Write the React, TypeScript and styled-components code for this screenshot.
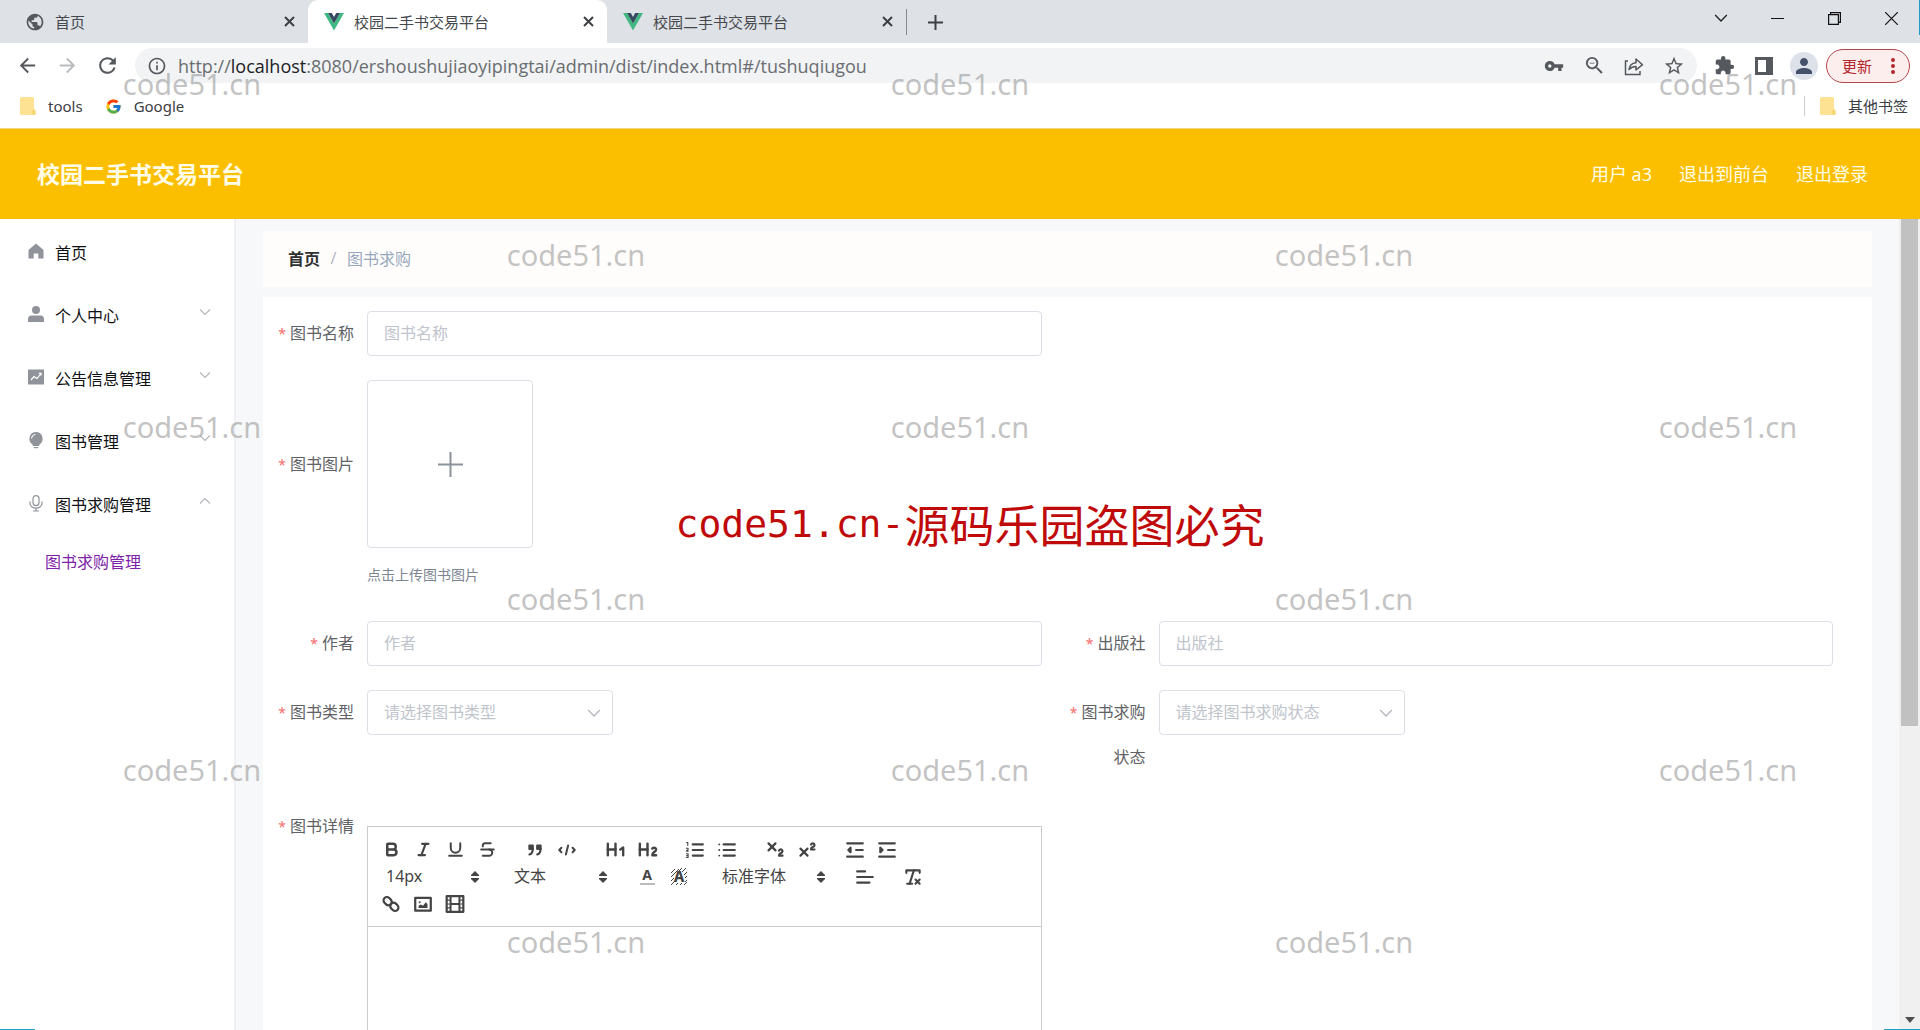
import React from "react";
import styled, { createGlobalStyle, css } from "styled-components";
import {
  MdArrowBack,
  MdArrowForward,
  MdRefresh,
  MdInfoOutline,
  MdVpnKey,
  MdZoomOut,
  MdStarBorder,
  MdExtension,
  MdPerson,
  MdPublic,
} from "react-icons/md";
import { FcGoogle } from "react-icons/fc";
import {
  Bold,
  Italic,
  Underline,
  Strikethrough,
  Heading1,
  Heading2,
  Subscript,
  Superscript,
  RemoveFormatting,
} from "lucide-react";

const sans = `"Noto Sans", "Noto Sans CJK SC", sans-serif`;

const GlobalStyle = createGlobalStyle`
  *, *::before, *::after { box-sizing: border-box; }
  body { margin: 0; font-family: ${sans}; font-size: 16px; color: #303133; overflow: hidden; }
  button, input, select, textarea { font: inherit; color: inherit; }
  button { background: none; border: 0; padding: 0; cursor: pointer; }
  a { color: inherit; text-decoration: none; }
  svg { display: block; flex: none; }
  ul, ol { list-style: none; margin: 0; padding: 0; }
`;

/* ---------- browser frame ---------- */

const Window = styled.div`
  position: relative;
  display: flex;
  flex-direction: column;
  height: 100vh;
  overflow: hidden;
  background: #fff;
`;

const TabStrip = styled.div`
  display: flex;
  flex: none;
  height: 43px;
  padding-left: 9px;
  background: #dee1e6;
`;

const Tab = styled.div<{ $active?: boolean }>`
  display: flex;
  align-items: center;
  gap: 10px;
  flex: 0 1 299px;
  padding: 0 10px 0 16px;
  border-radius: 10px 10px 0 0;
  background: ${(p) => (p.$active ? "#fff" : "transparent")};
  font-size: 15px;
  color: #45484c;
`;

const TabTitle = styled.span`
  flex: 1;
  overflow: hidden;
  white-space: nowrap;
`;

const TabClose = styled.button`
  display: grid;
  place-items: center;
  width: 18px;
  height: 18px;
`;

const NewTab = styled.button`
  display: grid;
  place-items: center;
  width: 58px;
  height: 26px;
  margin-top: 9px;
  border-left: 1px solid #85888d;
`;

const WindowControls = styled.div`
  display: flex;
  height: 36px;
  margin-left: auto;
`;

const WindowButton = styled.button`
  display: grid;
  place-items: center;
  width: 57px;
`;

const Toolbar = styled.div`
  display: flex;
  align-items: center;
  flex: none;
  height: 45px;
  padding: 0 10px 0 7px;
`;

const ToolButton = styled.button<{ $muted?: boolean }>`
  display: grid;
  place-items: center;
  flex: none;
  width: 40px;
  height: 34px;
  color: ${(p) => (p.$muted ? "#b9bbbe" : "#55585c")};
`;

const AddressBar = styled.div`
  display: flex;
  align-items: center;
  flex: 1;
  height: 35px;
  margin: 0 7px 0 8px;
  padding: 0 3px 0 12px;
  border-radius: 18px;
  background: #f1f3f4;
  color: #55585c;
`;

const Url = styled.span`
  flex: 1;
  margin-left: 11px;
  overflow: hidden;
  font-family: "Open Sans", sans-serif;
  font-size: 18px;
  line-height: 26px;
  white-space: nowrap;
  color: #6a6d71;

  b {
    font-weight: 400;
    color: #202124;
  }
`;

const Avatar = styled.span`
  display: grid;
  place-items: center;
  width: 28px;
  height: 28px;
  border-radius: 50%;
  background: #dde1ea;
  color: #45506b;
`;

const UpdateButton = styled.button`
  display: flex;
  align-items: center;
  justify-content: space-between;
  flex: none;
  width: 84px;
  height: 34px;
  margin-left: 2px;
  padding: 0 14px 0 15px;
  border: 1px solid #b4474c;
  border-radius: 17px;
  background: #fbeeed;
  font-size: 15px;
  color: #b3262b;
`;

const Bookmarks = styled.div`
  display: flex;
  align-items: center;
  flex: none;
  gap: 22px;
  height: 41px;
  padding: 0 12px 4px 20px;
  border-bottom: 1px solid #efd68a;
`;

const Bookmark = styled.a<{ $end?: boolean }>`
  display: flex;
  align-items: center;
  gap: 12px;
  font-size: 15px;
  line-height: 20px;
  color: #3c4043;
  ${(p) =>
    p.$end &&
    css`
      margin-left: auto;
      padding-left: 15px;
      border-left: 1px solid #c9ccd0;
    `}
`;

/* ---------- admin page ---------- */

const Header = styled.header`
  display: flex;
  align-items: center;
  justify-content: space-between;
  flex: none;
  height: 90px;
  padding: 0 52px 0 37px;
  background: #fcbf00;
  color: #fffde8;
`;

const Brand = styled.h1`
  margin: 0;
  font-size: 23px;
  line-height: 32px;
  font-weight: 700;
`;

const HeaderLinks = styled.div`
  display: flex;
  gap: 27px;
  font-size: 18px;
  line-height: 28px;
`;

const Body = styled.div`
  display: flex;
  flex: 1;
  min-height: 0;
`;

const Sidebar = styled.nav`
  flex: none;
  width: 236px;
  padding-top: 1px;
  border-right: 2px solid #eff0f3;
  background: #fff;
`;

const MenuButton = styled.button`
  display: flex;
  align-items: center;
  gap: 11px;
  width: 100%;
  height: 63px;
  padding: 0 23px 0 28px;
  text-align: left;
  color: #101113;
`;

const MenuText = styled.span`
  flex: 1;
`;

const MenuArrow = styled.span`
  margin-bottom: 6px;
`;

const SubMenuLink = styled.a`
  display: block;
  padding-left: 45px;
  line-height: 54px;
  color: #7d22a8;
`;

const Scroller = styled.main`
  flex: 1;
  min-width: 0;
  padding: 12px 27px 0;
  overflow: hidden;
  background: #f6f8fa;
`;

const Breadcrumb = styled.nav`
  display: flex;
  align-items: center;
  gap: 10px;
  height: 56px;
  margin-bottom: 10px;
  padding: 0 25px 2px;
  background: #fffdfb;
  color: #97a8be;
`;

const CrumbHome = styled.a`
  font-weight: 700;
  color: #303133;
`;

const CrumbSlash = styled.span`
  width: 7px;
  text-align: center;
  color: #b4b9c4;
`;

const FormCard = styled.form`
  display: grid;
  grid-template-columns: 1fr 1fr;
  row-gap: 24px;
  padding: 14px 13px;
  background: #fff;
`;

const Field = styled.div<{ $wide?: boolean }>`
  display: grid;
  grid-template-columns: 91px minmax(0, 1fr);
  padding-right: 26px;
  ${(p) =>
    p.$wide &&
    css`
      grid-column: 1 / -1;
      width: 50%;
    `}
`;

const Label = styled.label<{ $tall?: boolean }>`
  padding-right: 13px;
  text-align: right;
  line-height: ${(p) => (p.$tall ? 168 : 45)}px;
  color: #606266;

  &::before {
    content: "*";
    margin-right: 4px;
    font-size: 14px;
    color: #f56c6c;
  }
`;

const TextInput = styled.input`
  width: 100%;
  height: 45px;
  padding: 0 16px 2px;
  border: 1px solid #dcdfe6;
  border-radius: 4px;
  background: #fff;
  outline: 0;

  &::placeholder {
    color: #c0c4cc;
    opacity: 1;
  }
`;

const SelectBox = styled.div`
  display: grid;
  align-items: center;
  width: 246px;
  height: 45px;

  > * {
    grid-area: 1 / 1;
  }

  > svg {
    justify-self: end;
    margin-right: 12px;
    pointer-events: none;
  }
`;

const Select = styled.select`
  width: 100%;
  height: 45px;
  padding: 0 36px 2px 16px;
  appearance: none;
  border: 1px solid #dcdfe6;
  border-radius: 4px;
  background: #fff;
  color: #c0c4cc;
`;

const UploadButton = styled.button`
  display: grid;
  place-items: center;
  width: 166px;
  height: 168px;
  border: 1px solid #dcdfe6;
  border-radius: 4px;
`;

const UploadHint = styled.div`
  padding: 16px 0 11px;
  font-size: 14px;
  line-height: 22px;
  color: #7d8592;
`;

const Editor = styled.div`
  margin-top: 22px;
  border: 1px solid #ccc;
`;

const EditorToolbar = styled.div`
  padding: 9px 7px;
  border-bottom: 1px solid #ccc;
  color: #444;
`;

const EditorRow = styled.div`
  display: flex;
  gap: 16px;
  height: 27px;
`;

const EditorGroup = styled.span`
  display: flex;
`;

const EditorButton = styled.button`
  display: grid;
  place-items: center;
  width: 32px;
  height: 27px;
`;

const Picker = styled.span<{ $wide?: boolean }>`
  display: grid;
  align-items: center;
  width: ${(p) => (p.$wide ? 122 : 112)}px;

  > * {
    grid-area: 1 / 1;
  }

  > svg {
    justify-self: end;
    margin-right: 8px;
    pointer-events: none;
  }
`;

const PickerSelect = styled.select`
  width: 100%;
  height: 27px;
  padding: 0 11px 2px;
  appearance: none;
  border: 0;
  background: none;
  font-size: 16px;
`;

const EditorArea = styled.textarea`
  display: block;
  width: 100%;
  height: 240px;
  padding: 12px 16px;
  border: 0;
  outline: 0;
  resize: none;
  background: transparent;
`;

const ScrollTrack = styled.div`
  display: flex;
  flex-direction: column;
  justify-content: space-between;
  align-items: center;
  flex: none;
  width: 21px;
  padding-bottom: 7px;
  background: #f0f0f0;
`;

const ScrollThumb = styled.div`
  width: 17px;
  height: 63%;
  background: #c1c1c1;
`;

/* ---------- overlays ---------- */

const WatermarkLayer = styled.div`
  position: absolute;
  inset: -2px 0 2px;
  display: grid;
  grid-template-columns: repeat(5, 1fr);
  grid-template-rows: repeat(6, 1fr);
  place-items: center;
  pointer-events: none;
  font-size: 29px;
  line-height: 40px;
  color: rgba(150, 150, 150, 0.58);
`;

const Notice = styled.div`
  position: absolute;
  inset: 0;
  display: flex;
  align-items: center;
  justify-content: center;
  padding: 18px 0 0 20px;
  pointer-events: none;
  font-family: "Noto Sans CJK SC", sans-serif;
  font-size: 45px;
  line-height: 60px;
  white-space: nowrap;
  color: #c00a0a;
`;

const NoticeLatin = styled.span`
  font-family: "DejaVu Sans Mono", monospace;
  font-size: 38px;
`;

const Sliver = styled.i<{ $at: "topRight" | "bottomRight" | "bottomLeft" }>`
  position: absolute;
  background: #1f9fc4;
  ${(p) => p.$at === "topRight" && "top: 0; right: 0; width: 1px; height: 35px;"}
  ${(p) => p.$at === "bottomRight" && "bottom: 0; right: 0; width: 36px; height: 1px;"}
  ${(p) => p.$at === "bottomLeft" && "bottom: 0; left: 0; width: 35px; height: 1px;"}
`;

/* ---------- drawings ---------- */

const VueLogo = () => (
  <svg width="20" height="18" viewBox="0 0 20 18">
    <path d="M0 0h4l6 10.500L16 0h4L10 17.500z" fill="#41b883" />
    <path d="M4 0h3.800L10 4l2.200-4H16l-6 10.500z" fill="#35495e" />
  </svg>
);

const Cross = () => (
  <svg width="11" height="11" viewBox="0 0 11 11" stroke="#3c4043" strokeWidth="2">
    <path d="M1 1l9 9M10 1l-9 9" />
  </svg>
);

const Folder = () => (
  <svg width="16" height="18" viewBox="0 0 16 18">
    <path d="M1.500 0h11A1.500 1.500 0 0 1 14 1.500V12l1.500 2v2.500a1.500 1.500 0 0 1-1.500 1.500h-12.500A1.500 1.500 0 0 1 0 16.500v-15A1.500 1.500 0 0 1 1.500 0z" fill="#fde293" />
    <path d="M12.500 18v-4l1.500-2 1.500 2v2.500a1.500 1.500 0 0 1-1.500 1.500z" fill="#f3d36b" />
  </svg>
);

const ShareIcon = () => (
  <svg width="20" height="20" viewBox="0 0 20 20" fill="none" stroke="currentColor" strokeWidth="1.500">
    <path d="M4 5H1.500v13.500H16V15" />
    <path d="M5 13.500c.5-4.500 3-6.500 7-6.800V3l6.500 5.700L12 14v-3.500c-3 0-5 .8-7 3z" strokeLinejoin="round" />
  </svg>
);

const SidePanelIcon = () => (
  <svg width="18" height="18" viewBox="0 0 18 18">
    <path d="M0 0h18v18H0zM3 3v12h8V3z" fill="currentColor" fillRule="evenodd" />
  </svg>
);

const Dots = () => (
  <svg width="4" height="16" viewBox="0 0 4 16" fill="currentColor">
    <circle cx="2" cy="2" r="2" />
    <circle cx="2" cy="8" r="2" />
    <circle cx="2" cy="14" r="2" />
  </svg>
);

const Chevron = ({ up, size = 12, color = "#b4b7bd" }: { up?: boolean; size?: number; color?: string }) => (
  <svg width={size} height={size} viewBox="0 0 12 12" fill="none" stroke={color} strokeWidth="1.200">
    <path d={up ? "M1 8.500l5-5 5 5" : "M1 3.500l5 5 5-5"} />
  </svg>
);

const menuDrawings: Record<string, React.ReactNode> = {
  home: <path d="M8 .5L.5 7v8.500h5.200v-5h4.600v5h5.200V7z" fill="#909399" />,
  user: (
    <g fill="#909399">
      <circle cx="8" cy="4" r="4" />
      <path d="M0 16v-3a3.500 3.500 0 0 1 3.500-3.500h9A3.500 3.500 0 0 1 16 13v3z" />
    </g>
  ),
  chart: (
    <g>
      <path d="M0 .5h16v15H0z" fill="#909399" />
      <path d="M3 11l3-3.500 3 2 4-5M10.800 4.300H13v2.200" fill="none" stroke="#fff" strokeWidth="1.200" />
    </g>
  ),
  bulb: (
    <g>
      <path d="M8 0a6.800 6.800 0 0 1 3.500 12.500L11 14H5l-.5-1.500A6.800 6.800 0 0 1 8 0zM5.500 15h5l-1 1.300h-3z" fill="#909399" />
      <path d="M3.600 6.500A4.500 4.500 0 0 1 7.500 2.500" fill="none" stroke="#fff" strokeWidth="1.100" />
    </g>
  ),
  mic: (
    <g fill="none" stroke="#909399" strokeWidth="1.200">
      <rect x="5" y=".6" width="6" height="10" rx="3" />
      <path d="M2 6.500v1.700a6 5 0 0 0 12 0V6.500M8 13.200V16M5 16h6" />
    </g>
  ),
};

const PickerArrows = () => (
  <svg width="8" height="12" viewBox="0 0 8 12" fill="#444">
    <path d="M4 0l4 4v1H0V4zM4 12l4-4V7H0v1z" />
  </svg>
);

const Quill = ({ children }: { children: React.ReactNode }) => (
  <svg width="20" height="20" viewBox="0 0 18 18" fill="none" stroke="#444" strokeWidth="2" strokeLinecap="round" strokeLinejoin="round">
    {children}
  </svg>
);

const quote = (
  <Quill>
    <path d="M4 5h3v3H4zM11 5h3v3h-3z" fill="#444" />
    <path d="M7 8c0 4-3 5-3 5M14 8c0 4-3 5-3 5" />
  </Quill>
);
const code = (
  <Quill>
    <path d="M4 7L2 9l2 2M14 7l2 2-2 2M10 5L8 13" strokeWidth="1.800" />
  </Quill>
);
const orderedList = (
  <Quill>
    <path d="M7 4h9M7 9h9M7 14h9" />
    <path d="M1.500 2.200h1v2.600M1.200 7.400h1.600v1L1.200 10h1.800M1.200 12.400h1.600v3.200H1.200M1.500 14h1" strokeWidth="1" />
  </Quill>
);
const bulletList = (
  <Quill>
    <path d="M6 4h10M6 9h10M6 14h10" />
    <path d="M2 4h.1M2 9h.1M2 14h.1" strokeWidth="1.600" />
  </Quill>
);
const outdent = (
  <Quill>
    <path d="M2 3h14M2 15h14M10 9h6" />
    <path d="M5 7v4L3 9z" fill="#444" />
  </Quill>
);
const indent = (
  <Quill>
    <path d="M2 3h14M2 15h14M10 9h6" />
    <path d="M3 7v4l2-2z" fill="#444" />
  </Quill>
);
const alignLeft = (
  <Quill>
    <path d="M2 4h7M2 9h14M2 14h11" />
  </Quill>
);
const link = (
  <Quill>
    <rect x="2" y="3.500" width="8" height="6" rx="3" transform="rotate(45 6 6.500)" />
    <rect x="8" y="8.500" width="8" height="6" rx="3" transform="rotate(45 12 11.500)" />
  </Quill>
);
const image = (
  <Quill>
    <rect x="2" y="3.500" width="14" height="11.500" />
    <circle cx="6" cy="7.500" r=".9" fill="#444" strokeWidth="0" />
    <path d="M5 12.500v-2l2-1 2 1 2.500-3L13 9v3.500z" fill="#444" strokeWidth="0" />
  </Quill>
);
const video = (
  <Quill>
    <rect x="1.500" y="2" width="15" height="14" />
    <path d="M5 2v14M13 2v14M5 9h8" strokeWidth="1.800" />
    <path d="M2 5.500h2M2 9h2M2 12.500h2M14 5.500h2M14 9h2M14 12.500h2" strokeWidth="1" />
  </Quill>
);
const textColor = (
  <svg width="20" height="26" viewBox="0 -3 20 26">
    <text x="10" y="13" textAnchor="middle" fontFamily="Noto Sans" fontWeight="700" fontSize="14" fill="#444">A</text>
    <rect x="3" y="16" width="15" height="2" fill="#bbb" />
  </svg>
);
const backColor = (
  <svg width="20" height="26" viewBox="0 -3 20 26">
    <path d="M2 6l4-4M2 10l8-8M2 14l3-3M9 5l4-4M2 18l4-4M13 5l4-4M15 8l3-3M16 11l2-2M16 15l2-2M7 18l2-2M11 18l2-2M15 18l3-3" stroke="#444" strokeWidth="1" />
    <text x="10" y="15" textAnchor="middle" fontFamily="Noto Sans" fontWeight="800" fontSize="15" fill="#444">A</text>
  </svg>
);

/* ---------- data ---------- */

const tabs = [
  { title: "首页", icon: <MdPublic size={20} color="#55585c" /> },
  { title: "校园二手书交易平台", icon: <VueLogo />, active: true },
  { title: "校园二手书交易平台", icon: <VueLogo /> },
];

const menu = [
  { text: "首页", icon: "home" },
  { text: "个人中心", icon: "user", arrow: true },
  { text: "公告信息管理", icon: "chart", arrow: true },
  { text: "图书管理", icon: "bulb", arrow: true },
  { text: "图书求购管理", icon: "mic", arrow: true, open: true },
];

type Tool = [string, React.ReactNode];

const firstRow: Tool[][] = [
  [
    ["粗体", <Bold size={17} strokeWidth={3.5} />],
    ["斜体", <Italic size={17} strokeWidth={3} />],
    ["下划线", <Underline size={19} strokeWidth={2.5} />],
    ["删除线", <Strikethrough size={19} strokeWidth={2.5} />],
  ],
  [["引用", quote], ["代码", code]],
  [
    ["标题一", <Heading1 size={23} strokeWidth={2.5} />],
    ["标题二", <Heading2 size={23} strokeWidth={2.5} />],
  ],
  [["有序列表", orderedList], ["无序列表", bulletList]],
  [
    ["下标", <Subscript size={21} strokeWidth={2.5} />],
    ["上标", <Superscript size={21} strokeWidth={2.5} />],
  ],
  [["减少缩进", outdent], ["增加缩进", indent]],
];

const Tools = ({ items }: { items: Tool[] }) => (
  <EditorGroup>
    {items.map(([name, icon]) => (
      <EditorButton key={name} type="button" aria-label={name}>
        {icon}
      </EditorButton>
    ))}
  </EditorGroup>
);

const PickerBox = ({ name, value, wide }: { name: string; value: string; wide?: boolean }) => (
  <Picker $wide={wide}>
    <PickerSelect aria-label={name}>
      <option>{value}</option>
    </PickerSelect>
    <PickerArrows />
  </Picker>
);

const InputField = ({ id, label, wide }: { id: string; label: string; wide?: boolean }) => (
  <Field $wide={wide}>
    <Label htmlFor={id}>{label}</Label>
    <TextInput id={id} placeholder={label} />
  </Field>
);

const SelectField = ({ id, label, hint }: { id: string; label: string; hint: string }) => (
  <Field>
    <Label htmlFor={id}>{label}</Label>
    <SelectBox>
      <Select id={id}>
        <option>{hint}</option>
      </Select>
      <Chevron size={14} color="#b4b8c0" />
    </SelectBox>
  </Field>
);

export default function App() {
  return (
    <Window lang="zh-CN">
      <GlobalStyle />

      <TabStrip>
        {tabs.map((tab, i) => (
          <Tab key={i} $active={tab.active}>
            {tab.icon}
            <TabTitle>{tab.title}</TabTitle>
            <TabClose aria-label="关闭标签页">
              <Cross />
            </TabClose>
          </Tab>
        ))}
        <NewTab aria-label="新标签页">
          <svg width="15" height="15" viewBox="0 0 15 15" stroke="#3c4043" strokeWidth="2">
            <path d="M7.500 0v15M0 7.500h15" />
          </svg>
        </NewTab>
        <WindowControls>
          <WindowButton aria-label="标签搜索">
            <Chevron size={14} color="#222" />
          </WindowButton>
          <WindowButton aria-label="最小化">
            <svg width="13" height="1"><path d="M0 .5h13" stroke="#111" /></svg>
          </WindowButton>
          <WindowButton aria-label="还原">
            <svg width="13" height="13" viewBox="0 0 13 13" fill="none" stroke="#111" strokeWidth="1.200">
              <path d="M.6 2.600h9.800v9.800H.6zM2.600 2.600v-2h9.800v9.800h-2" />
            </svg>
          </WindowButton>
          <WindowButton aria-label="关闭">
            <svg width="13" height="13" viewBox="0 0 13 13" stroke="#111" strokeWidth="1.200">
              <path d="M0 0l13 13M13 0L0 13" />
            </svg>
          </WindowButton>
        </WindowControls>
      </TabStrip>

      <Toolbar>
        <ToolButton aria-label="后退"><MdArrowBack size={23} /></ToolButton>
        <ToolButton aria-label="前进" $muted><MdArrowForward size={23} /></ToolButton>
        <ToolButton aria-label="刷新"><MdRefresh size={25} /></ToolButton>
        <AddressBar>
          <MdInfoOutline size={20} />
          <Url>
            http://<b>localhost</b>:8080/ershoushujiaoyipingtai/admin/dist/index.html#/tushuqiugou
          </Url>
          <ToolButton aria-label="密码"><MdVpnKey size={20} /></ToolButton>
          <ToolButton aria-label="缩放"><MdZoomOut size={23} /></ToolButton>
          <ToolButton aria-label="分享"><ShareIcon /></ToolButton>
          <ToolButton aria-label="收藏"><MdStarBorder size={22} /></ToolButton>
        </AddressBar>
        <ToolButton aria-label="扩展程序"><MdExtension size={21} /></ToolButton>
        <ToolButton aria-label="侧边栏"><SidePanelIcon /></ToolButton>
        <ToolButton aria-label="用户">
          <Avatar><MdPerson size={24} /></Avatar>
        </ToolButton>
        <UpdateButton>
          更新
          <Dots />
        </UpdateButton>
      </Toolbar>

      <Bookmarks>
        <Bookmark href="#tools"><Folder />tools</Bookmark>
        <Bookmark href="#google"><FcGoogle size={17} />Google</Bookmark>
        <Bookmark href="#other" $end><Folder />其他书签</Bookmark>
      </Bookmarks>

      <Header>
        <Brand>校园二手书交易平台</Brand>
        <HeaderLinks>
          <span>用户 a3</span>
          <a href="#front">退出到前台</a>
          <a href="#logout">退出登录</a>
        </HeaderLinks>
      </Header>

      <Body>
        <Sidebar>
          <ul>
            {menu.map((item) => (
              <li key={item.text}>
                <MenuButton>
                  <svg width="16" height="17" viewBox="0 0 16 17">{menuDrawings[item.icon]}</svg>
                  <MenuText>{item.text}</MenuText>
                  {item.arrow && (
                    <MenuArrow>
                      <Chevron up={item.open} />
                    </MenuArrow>
                  )}
                </MenuButton>
                {item.open && <SubMenuLink href="#/tushuqiugou">图书求购管理</SubMenuLink>}
              </li>
            ))}
          </ul>
        </Sidebar>

        <Scroller>
          <Breadcrumb>
            <CrumbHome href="#/">首页</CrumbHome>
            <CrumbSlash>/</CrumbSlash>
            <span>图书求购</span>
          </Breadcrumb>

          <FormCard>
            <InputField id="name" label="图书名称" wide />
            <Field $wide>
              <Label htmlFor="picture" $tall>图书图片</Label>
              <div>
                <UploadButton id="picture" type="button" aria-label="上传图书图片">
                  <svg width="25" height="25" viewBox="0 0 25 25" stroke="#8c939d" strokeWidth="2">
                    <path d="M12.500 0v25M0 12.500h25" />
                  </svg>
                </UploadButton>
                <UploadHint>点击上传图书图片</UploadHint>
              </div>
            </Field>
            <InputField id="author" label="作者" />
            <InputField id="press" label="出版社" />
            <SelectField id="type" label="图书类型" hint="请选择图书类型" />
            <SelectField id="status" label="图书求购状态" hint="请选择图书求购状态" />
            <Field $wide>
              <Label htmlFor="detail">图书详情</Label>
              <Editor>
                <EditorToolbar>
                  <EditorRow>
                    {firstRow.map((items, i) => (
                      <Tools key={i} items={items} />
                    ))}
                  </EditorRow>
                  <EditorRow>
                    <PickerBox name="字号" value="14px" />
                    <PickerBox name="标题" value="文本" />
                    <Tools items={[["文字颜色", textColor], ["背景颜色", backColor]]} />
                    <PickerBox name="字体" value="标准字体" wide />
                    <Tools items={[["对齐", alignLeft]]} />
                    <Tools items={[["清除格式", <RemoveFormatting size={20} strokeWidth={2.5} />]]} />
                  </EditorRow>
                  <EditorRow>
                    <Tools items={[["链接", link], ["图片", image], ["视频", video]]} />
                  </EditorRow>
                </EditorToolbar>
                <EditorArea id="detail" />
              </Editor>
            </Field>
          </FormCard>
        </Scroller>

        <ScrollTrack>
          <ScrollThumb />
          <svg width="10" height="6" viewBox="0 0 10 6"><path d="M0 0h10L5 6z" fill="#505050" /></svg>
        </ScrollTrack>
      </Body>

      <WatermarkLayer aria-hidden>
        {Array.from({ length: 30 }, (_, i) => (
          <span key={i}>{i % 2 === 0 ? "code51.cn" : ""}</span>
        ))}
      </WatermarkLayer>
      <Notice>
        <NoticeLatin>code51.cn-</NoticeLatin>源码乐园盗图必究
      </Notice>
      <Sliver $at="topRight" />
      <Sliver $at="bottomRight" />
      <Sliver $at="bottomLeft" />
    </Window>
  );
}
